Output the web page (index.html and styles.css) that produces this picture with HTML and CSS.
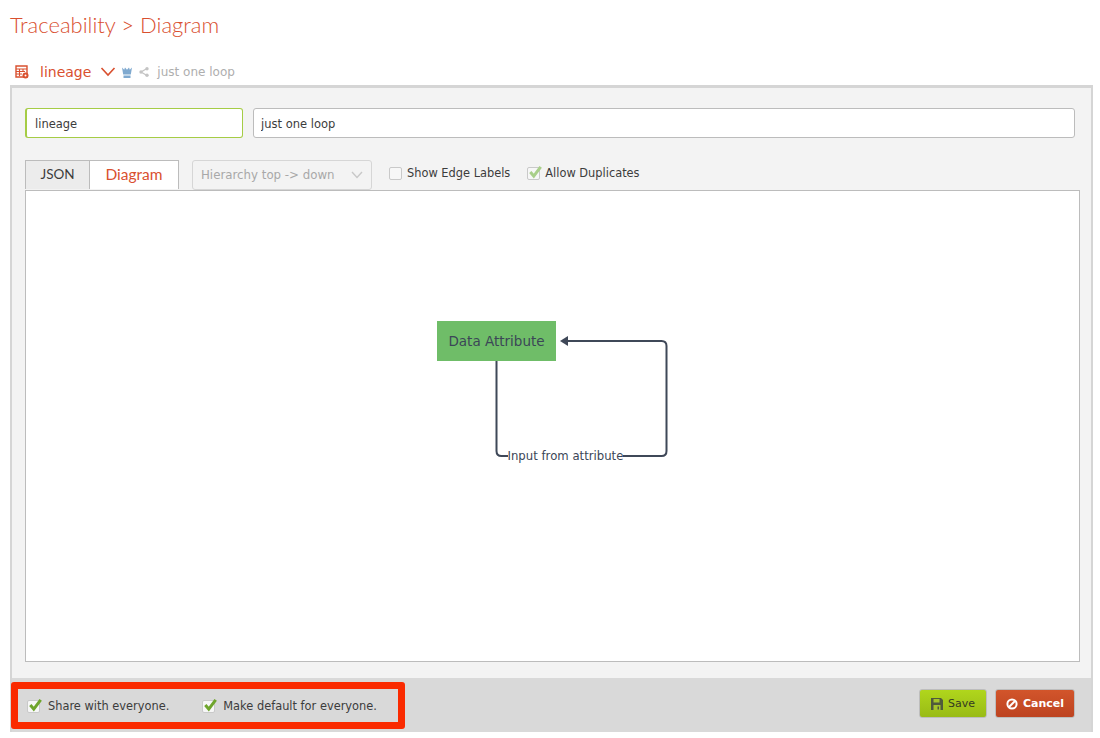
FILE: index.html
```html
<!DOCTYPE html>
<html lang="en">
<head>
  <meta charset="UTF-8" />
  <title>Traceability - Diagram</title>
  <link rel="stylesheet" href="styles.css">
</head>
<body>

  <h1 class="page-title">Traceability &gt; Diagram</h1>

  <div class="view-bar">
    <svg class="view-icon" width="14" height="14" viewBox="0 0 14 14">
      <path d="M1 1h11v11H1z" fill="none" stroke="#d9502f" stroke-width="1.4"/>
      <path d="M1 4h11M1 6.5h9M1 9h6M4.5 4v7M8 4v3" stroke="#d9502f" stroke-width="1.1" fill="none"/>
      <circle cx="10.5" cy="10.5" r="3" fill="#d9502f"/>
      <circle cx="10.5" cy="10.5" r="1" fill="#fff"/>
    </svg>
    <span class="view-name">lineage</span>
    <svg class="view-caret" width="16" height="10" viewBox="0 0 16 10">
      <path d="M1.5 1l6.5 7 6.5-7" fill="none" stroke="#d9502f" stroke-width="1.6"/>
    </svg>
    <svg class="crown" width="10" height="11" viewBox="0 0 10 11">
      <path d="M0 0.500l2.200 2.200L3 0.500l2 2.200 2-2.200 0.800 2.200L10 0.500 8.800 7.500H1.200zM1.500 8.500h7V11h-7z" fill="#7fa9cf"/>
    </svg>
    <svg class="share" width="10" height="10" viewBox="0 0 10 10">
      <path d="M8 1.500L2 5l6 3.500" fill="none" stroke="#c4c4c4" stroke-width="1.300"/>
      <circle cx="8" cy="1.800" r="1.700" fill="#c4c4c4"/>
      <circle cx="2" cy="5" r="1.700" fill="#c4c4c4"/>
      <circle cx="8" cy="8.200" r="1.700" fill="#c4c4c4"/>
    </svg>
    <span class="view-desc">just one loop</span>
  </div>

  <div class="panel">
    <div class="panel-body">
      <div class="fields">
        <input class="field field-name" type="text" value="lineage">
        <input class="field field-desc" type="text" value="just one loop">
      </div>

      <div class="toolbar">
        <div class="tabs">
          <span class="tab">JSON</span>
          <span class="tab tab-active">Diagram</span>
        </div>
        <div class="select">
          <span>Hierarchy top -&gt; down</span>
          <svg width="12" height="8" viewBox="0 0 12 8">
            <path d="M1 1l5 5.500L11 1" fill="none" stroke="#c8c8c8" stroke-width="1.400"/>
          </svg>
        </div>
        <label class="check check-bar"><span class="box"></span>Show Edge Labels</label>
        <label class="check check-bar">
          <span class="box">
            <svg width="15" height="14" viewBox="0 0 13 12"><path d="M2 6l3 3.500L11 1.500" fill="none" stroke="#a9cf8a" stroke-width="2.600"/></svg>
          </span>Allow Duplicates
        </label>
      </div>

      <div class="canvas">
        <svg class="diagram" width="1053" height="470" viewBox="0 0 1053 470">
          <rect class="node" x="411" y="130" width="119" height="40"/>
          <text class="node-label" x="470.500" y="155" text-anchor="middle">Data Attribute</text>
          <path class="edge" d="M470.500 170V260q0 5 5 5H482M597 265H635.500q5 0 5-5V155q0-5-5-5H538"/>
          <path class="arrow" d="M534 150l8-5v10z"/>
          <text class="edge-label" x="481.500" y="269">Input from attribute</text>
        </svg>
      </div>
    </div>

    <div class="panel-footer">
      <div class="share-options">
        <label class="check">
          <span class="box">
            <svg width="15" height="14" viewBox="0 0 13 12"><path d="M2 6l3 3.500L11 1.500" fill="none" stroke="#6fa52c" stroke-width="2.600"/></svg>
          </span>Share with everyone.
        </label>
        <label class="check">
          <span class="box">
            <svg width="15" height="14" viewBox="0 0 13 12"><path d="M2 6l3 3.500L11 1.500" fill="none" stroke="#6fa52c" stroke-width="2.600"/></svg>
          </span>Make default for everyone.
        </label>
      </div>
      <div class="actions">
        <button class="btn btn-save">
          <svg width="12" height="12" viewBox="0 0 12 12">
            <path d="M0 0h10l2 2v10H0z" fill="#4f5a3c"/>
            <path d="M2.500 1h6v3.500h-6z" fill="#a5c42a"/>
            <path d="M2.500 7h7v5h-7z" fill="#a5c42a"/>
            <path d="M6.500 8.500h1.500v3H6.500z" fill="#4f5a3c"/>
          </svg>
          Save
        </button>
        <button class="btn btn-cancel">
          <svg width="12" height="12" viewBox="0 0 12 12">
            <circle cx="6" cy="6" r="4.600" fill="none" stroke="#fff" stroke-width="2"/>
            <path d="M3 9l6-6" stroke="#fff" stroke-width="2"/>
          </svg>
          Cancel
        </button>
      </div>
    </div>
  </div>

</body>
</html>
```

FILE: styles.css
```css
:root {
  --orange: #d9502f;
  --line: #c4c4c4;
  --text: #3c3c3c;
}

body {
  margin: 0;
  background: #fff;
  color: var(--text);
  font-family: "DejaVu Sans", sans-serif;
  font-size: 11.4px;
}

.page-title {
  margin: 0;
  padding: 11px 10px 0;
  height: 52px;
  box-sizing: content-box;
  font-family: Lato, sans-serif;
  font-weight: 300;
  font-size: 22px;
  line-height: 27px;
  color: var(--orange);
}

/* view name row */
.view-bar {
  display: flex;
  align-items: center;
  height: 18px;
  padding-left: 15px;
}

.view-name {
  margin-left: 11px;
  font-size: 14px;
  color: var(--orange);
}

.view-caret {
  margin-left: 9px;
}

.crown {
  margin-left: 6px;
}

.share {
  margin-left: 7px;
}

.view-desc {
  margin-left: 8px;
  font-size: 12px;
  color: #aeaeae;
}

/* main panel */
.panel {
  width: 1079px;
  margin: 4px 0 0 10px;
  border: solid #d5d5d5;
  border-width: 3px 2px 0 2px;
}

.panel-body {
  height: 590px;
  box-sizing: border-box;
  padding: 20px 11px 0 13px;
  background: #f3f3f3;
}

.fields {
  display: flex;
  gap: 10px;
  padding-right: 5px;
}

.field {
  height: 30px;
  box-sizing: border-box;
  padding: 2px 7px 0;
  border: 1px solid #bcbcbc;
  border-radius: 3px;
  background: #fff;
  color: var(--text);
  font: 11.5px "DejaVu Sans", sans-serif;
}

.field-name {
  width: 218px;
  padding-left: 8px;
  border-color: #a5cc45;
  border-left-width: 2px;
}

.field-desc {
  flex: 1;
}

.toolbar {
  display: flex;
  align-items: center;
  height: 30px;
  margin-top: 22px;
}

.tabs {
  display: flex;
  align-self: flex-start;
  height: 29px;
  border: solid #bcbcbc;
  border-width: 1px 1px 0;
  box-sizing: border-box;
}

.tab {
  width: 63px;
  line-height: 27px;
  text-align: center;
  background: #ececec;
  font-family: "Lato", sans-serif;
  font-size: 13.5px;
}

.tab-active {
  width: 88px;
  border-left: 1px solid #bcbcbc;
  background: #fff;
  color: var(--orange);
  font-size: 15.5px;
}

.select {
  display: flex;
  align-items: center;
  justify-content: space-between;
  box-sizing: border-box;
  width: 180px;
  height: 30px;
  margin-left: 13px;
  padding: 0 8px;
  border: 1px solid #d6d6d6;
  border-radius: 3px;
  color: #a8a8a8;
  background: #f3f3f3;
  font-size: 11.8px;
}

.check {
  display: flex;
  align-items: center;
}

.check-bar {
  margin-left: 17px;
  padding-bottom: 4px;
}

.box {
  position: relative;
  flex: none;
  width: 11px;
  height: 11px;
  margin-right: 5px;
  border: 1px solid #c9c9c9;
  border-radius: 2px;
  background: #f7f7f7;
}

.box svg {
  position: absolute;
  left: 0;
  top: -3px;
}

.canvas {
  height: 472px;
  box-sizing: border-box;
  border: 1px solid #bcbcbc;
  background: #fff;
}

.diagram {
  display: block;
}

.node {
  fill: #6fbd68;
}

.node-label {
  fill: #3b4657;
  font-size: 13.5px;
}

.edge {
  fill: none;
  stroke: #3f4858;
  stroke-width: 2;
}

.arrow {
  fill: #3f4858;
}

.edge-label {
  fill: #3b4657;
  font-size: 11.7px;
}

/* footer */
.panel-footer {
  display: flex;
  justify-content: space-between;
  align-items: center;
  height: 54px;
  background: #d9d9d9;
}

.share-options {
  display: flex;
  align-items: center;
  gap: 33px;
  width: 394px;
  height: 47px;
  box-sizing: border-box;
  margin-left: -1px;
  padding: 2px 0 0 9px;
  border: 7px solid #fa2a00;
  border-radius: 3px;
}

.share-options .box {
  margin-right: 8px;
}

.actions {
  display: flex;
  gap: 8px;
  padding: 0 16px 3px 0;
}

.btn {
  display: flex;
  align-items: center;
  justify-content: center;
  gap: 5px;
  height: 29px;
  border: 1px solid #bdbdbd;
  border-radius: 3px;
  font: 11px "DejaVu Sans", sans-serif;
}

.btn-save {
  width: 68px;
  background: linear-gradient(#b0d61c, #99bb16);
  color: #343a22;
}

.btn-cancel {
  width: 80px;
  background: linear-gradient(#d2552b, #bd4320);
  color: #fff;
  font-weight: bold;
}
```
